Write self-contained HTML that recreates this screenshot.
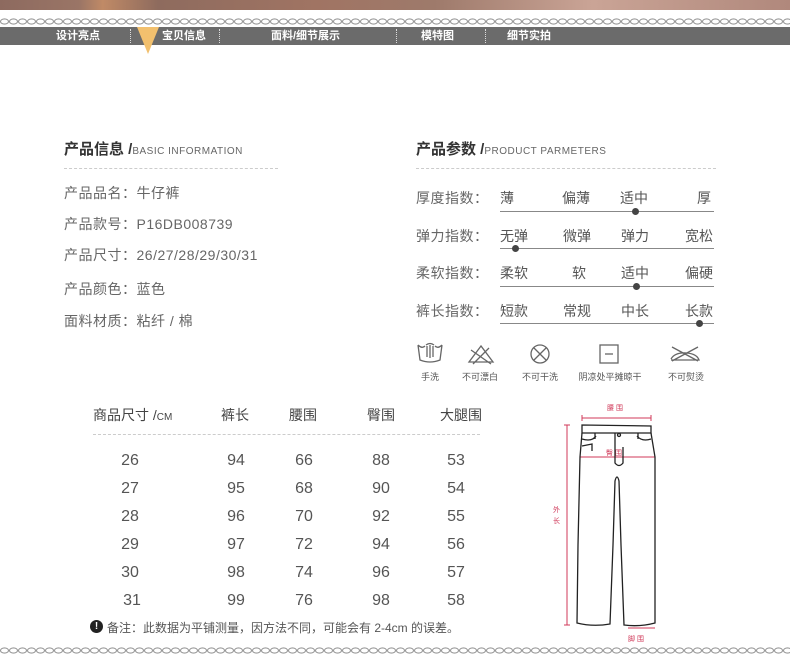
<!DOCTYPE html>
<html><head><meta charset="utf-8"><style>
*{margin:0;padding:0;box-sizing:border-box}
body{width:790px;height:656px;background:#fff;position:relative;overflow:hidden;font-family:"Liberation Sans","Noto Sans CJK SC",sans-serif;color:#555}
.a{position:absolute;white-space:nowrap}
.nav{position:absolute;left:0;top:27px;width:790px;height:18px;background:#6b6b6b}
.nv{position:absolute;top:28px;color:#fff;font-size:11px;font-weight:bold;line-height:16px}
.sep{position:absolute;top:29px;height:14px;border-left:1px dotted #ddd}
.t{font-size:15px;font-weight:bold;color:#333}
.t small{font-size:10px;font-weight:normal;color:#666;letter-spacing:.5px}
.dash{position:absolute;height:0;border-top:1px dashed #ccc}
.li{font-size:14px;color:#666;letter-spacing:.5px}
.op{font-size:14px;color:#555}
.ln{position:absolute;height:1px;background:#888;left:500px;width:214px}
.dot{position:absolute;width:7px;height:7px;border-radius:50%;background:#444}
.num{position:absolute;font-size:16px;color:#555;width:40px;text-align:center}
.ic{position:absolute;top:370px;font-size:9px;color:#555;width:70px;text-align:center}
</style></head><body>
<div class="a" style="left:0;top:0;width:790px;height:10px;background:linear-gradient(90deg,#8d6a5f 0%,#9a7566 10%,#c08a66 13%,#8e6b5e 20%,#a07463 40%,#9e7a6b 55%,#caa496 75%,#b0887c 100%)"></div>
<svg class="a" style="left:0;top:17px" width="790" height="9"><defs><pattern id="c" width="9" height="9" patternUnits="userSpaceOnUse"><ellipse cx="4.5" cy="4.5" rx="4" ry="2.6" fill="none" stroke="#999" stroke-width="1.1"/></pattern></defs><rect width="790" height="9" fill="url(#c)"/></svg>
<div class="nav"></div>
<svg class="a" style="left:137px;top:27px" width="22" height="27"><polygon points="0,0 22,0 11,27" fill="#f2c06e"/></svg>
<div class="nv" style="left:56px">设计亮点</div>
<div class="nv" style="left:162px">宝贝信息</div>
<div class="nv" style="left:271px">面料/细节展示</div>
<div class="nv" style="left:421px">模特图</div>
<div class="nv" style="left:507px">细节实拍</div>
<div class="sep" style="left:130px"></div><div class="sep" style="left:219px"></div><div class="sep" style="left:396px"></div><div class="sep" style="left:485px"></div>

<div class="a t" style="left:64px;top:138px">产品信息 /<small>BASIC INFORMATION</small></div>
<div class="dash" style="left:64px;top:168px;width:214px"></div>
<div class="a li" style="left:64px;top:183px">产品品名：牛仔裤</div>
<div class="a li" style="left:64px;top:214px">产品款号：P16DB008739</div>
<div class="a li" style="left:64px;top:245px">产品尺寸：26/27/28/29/30/31</div>
<div class="a li" style="left:64px;top:279px">产品颜色：蓝色</div>
<div class="a li" style="left:64px;top:311px">面料材质：粘纤 / 棉</div>

<div class="a t" style="left:416px;top:138px">产品参数 /<small>PRODUCT PARMETERS</small></div>
<div class="dash" style="left:416px;top:168px;width:300px"></div>
<div class="a li" style="left:416px;top:188px">厚度指数：</div>
<div class="a op" style="left:500px;top:188px">薄</div><div class="a op" style="left:562px;top:188px">偏薄</div><div class="a op" style="left:620px;top:188px">适中</div><div class="a op" style="left:697px;top:188px">厚</div>
<div class="ln" style="top:211px"></div><div class="dot" style="left:632px;top:208px"></div>
<div class="a li" style="left:416px;top:226px">弹力指数：</div>
<div class="a op" style="left:500px;top:226px">无弹</div><div class="a op" style="left:563px;top:226px">微弹</div><div class="a op" style="left:621px;top:226px">弹力</div><div class="a op" style="left:685px;top:226px">宽松</div>
<div class="ln" style="top:248px"></div><div class="dot" style="left:512px;top:245px"></div>
<div class="a li" style="left:416px;top:263px">柔软指数：</div>
<div class="a op" style="left:500px;top:263px">柔软</div><div class="a op" style="left:572px;top:263px">软</div><div class="a op" style="left:621px;top:263px">适中</div><div class="a op" style="left:685px;top:263px">偏硬</div>
<div class="ln" style="top:286px"></div><div class="dot" style="left:633px;top:283px"></div>
<div class="a li" style="left:416px;top:301px">裤长指数：</div>
<div class="a op" style="left:500px;top:301px">短款</div><div class="a op" style="left:563px;top:301px">常规</div><div class="a op" style="left:621px;top:301px">中长</div><div class="a op" style="left:685px;top:301px">长款</div>
<div class="ln" style="top:323px"></div><div class="dot" style="left:696px;top:320px"></div>

<svg class="a" style="left:405px;top:340px" width="310" height="30" fill="none" stroke="#666" stroke-width="1.3">
<path d="M13 5 L15 20 Q25 24 35 20 L37 5 M13 5 Q17 9 20 6 M30 6 Q33 9 37 5 M21 5 Q25 2 29 5 M22 6 L22 17 M25 5 L25 18 M28 6 L28 17"/>
<path d="M76 6 L64 22 L88 22 Z M66 10 L86 24 M84 8 L68 24"/>
<circle cx="135" cy="14" r="9"/><path d="M129 8 L141 20 M141 8 L129 20"/>
<rect x="195" y="5" width="18" height="18"/><path d="M200 14 L208 14"/>
<path d="M267 7 L293 21 M293 7 L267 21 M266 19 Q270 12 282 13 Q292 14 294 20 L266 20"/>
</svg>
<div class="ic" style="left:395px">手洗</div>
<div class="ic" style="left:445px">不可漂白</div>
<div class="ic" style="left:505px">不可干洗</div>
<div class="ic" style="left:575px">阴凉处平摊晾干</div>
<div class="ic" style="left:651px">不可熨烫</div>

<div class="a" style="left:93px;top:405px;font-size:14px;color:#444">商品尺寸 /<span style="font-size:10px">CM</span></div>
<div class="a" style="left:221px;top:405px;font-size:14px;color:#444">裤长</div>
<div class="a" style="left:289px;top:405px;font-size:14px;color:#444">腰围</div>
<div class="a" style="left:367px;top:405px;font-size:14px;color:#444">臀围</div>
<div class="a" style="left:440px;top:405px;font-size:14px;color:#444">大腿围</div>
<div class="dash" style="left:93px;top:434px;width:387px"></div>

<div class="num" style="left:110px;top:452px">26</div><div class="num" style="left:216px;top:452px">94</div><div class="num" style="left:284px;top:452px">66</div><div class="num" style="left:361px;top:452px">88</div><div class="num" style="left:436px;top:452px">53</div>
<div class="num" style="left:110px;top:480px">27</div><div class="num" style="left:216px;top:480px">95</div><div class="num" style="left:284px;top:480px">68</div><div class="num" style="left:361px;top:480px">90</div><div class="num" style="left:436px;top:480px">54</div>
<div class="num" style="left:110px;top:508px">28</div><div class="num" style="left:216px;top:508px">96</div><div class="num" style="left:284px;top:508px">70</div><div class="num" style="left:361px;top:508px">92</div><div class="num" style="left:436px;top:508px">55</div>
<div class="num" style="left:110px;top:536px">29</div><div class="num" style="left:216px;top:536px">97</div><div class="num" style="left:284px;top:536px">72</div><div class="num" style="left:361px;top:536px">94</div><div class="num" style="left:436px;top:536px">56</div>
<div class="num" style="left:110px;top:564px">30</div><div class="num" style="left:216px;top:564px">98</div><div class="num" style="left:284px;top:564px">74</div><div class="num" style="left:361px;top:564px">96</div><div class="num" style="left:436px;top:564px">57</div>
<div class="num" style="left:112px;top:592px">31</div><div class="num" style="left:216px;top:592px">99</div><div class="num" style="left:284px;top:592px">76</div><div class="num" style="left:361px;top:592px">98</div><div class="num" style="left:436px;top:592px">58</div>

<div class="a" style="left:90px;top:620px;width:13px;height:13px;border-radius:50%;background:#222;color:#fff;font-size:10px;font-weight:bold;text-align:center;line-height:13px">!</div>
<div class="a" style="left:107px;top:619px;font-size:12px;color:#555">备注：此数据为平铺测量，因方法不同，可能会有 2-4cm 的误差。</div>

<svg class="a" style="left:540px;top:395px" width="130" height="250">
<g stroke="#d03a5a" stroke-width="1" fill="none">
<path d="M42 23 L111 23 M42 20 L42 26 M111 20 L111 26"/>
<path d="M40 62 L115 62"/>
<path d="M27 30 L27 230 M24 30 L30 30 M24 230 L30 230"/>
<path d="M88 233 L115 233"/>
</g>
<g fill="#d03a5a" font-size="7"><text x="67" y="15">腰 围</text><text x="66" y="60">臀 围</text><text x="13" y="117">外</text><text x="13" y="128">长</text><text x="88" y="246">脚 围</text></g>
<g stroke="#222" stroke-width="1.3" fill="none">
<path d="M42 30 L111 31 L111 38 L42 38 Z"/>
<path d="M42 38 L40 62 L38 150 L37 228 Q53 232 70 229 L73 150 L75 86 Q77 78 79 86 L81 150 L84 230 Q100 232 115 228 L115 150 L115 62 L111 38"/>
<path d="M55 38 L55 44 M98 38 L98 44 M75 38 L75 68 Q79 73 83 68 L83 52"/>
<path d="M42 44 Q52 47 56 41 M111 44 Q102 47 97 41 M42 51 L52 49 L52 56"/>
<circle cx="79" cy="40" r="1.5"/>
</g>
</svg>

<svg class="a" style="left:0;top:646px" width="790" height="9"><rect width="790" height="9" fill="url(#c)"/></svg>
</body></html>
